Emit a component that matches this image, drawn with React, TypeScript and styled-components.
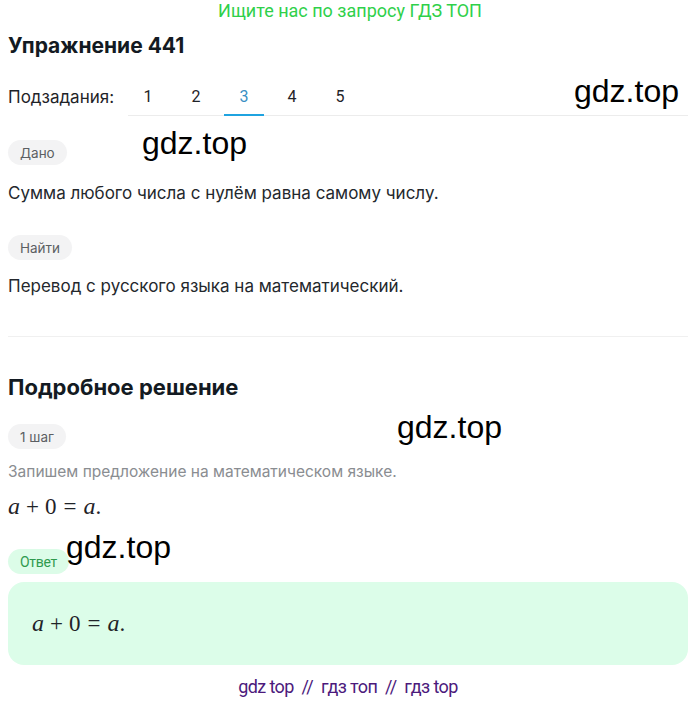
import styled, { createGlobalStyle } from "styled-components";

const GlobalStyle = createGlobalStyle`
  body {
    margin: 0;
    background: #ffffff;
    font-family: Inter, "Noto Sans", sans-serif;
    color: #1f2328;
  }
`;

const Page = styled.div`
  position: relative;
  width: 695px;
  padding: 0 7px 0 8px;
  box-sizing: border-box;
`;

const Banner = styled.div`
  font-family: Roboto, sans-serif;
  font-size: 18px;
  line-height: 22px;
  color: #2fd04a;
  text-align: center;
  padding-left: 4px;
`;

const Title = styled.h1`
  margin: 12px 0 0;
  font-size: 21px;
  line-height: 24px;
  font-weight: 700;
  color: #131a22;
`;

const TabsRow = styled.div`
  display: flex;
  align-items: flex-end;
  margin-top: 26px;
`;

const TabsLabel = styled.span`
  font-size: 17px;
  line-height: 26px;
  padding-bottom: 6px;
  width: 120px;
`;

const Tabs = styled.div`
  flex: 1;
  display: flex;
  gap: 8px;
  border-bottom: 1px solid #ececec;
`;

const Tab = styled.span<{ $active?: boolean }>`
  width: 40px;
  text-align: center;
  font-family: Roboto, sans-serif;
  font-size: 16px;
  line-height: 26px;
  padding-bottom: 4px;
  color: ${(p) => (p.$active ? "#3a8fc4" : "#1f2328")};
  border-bottom: 2px solid ${(p) => (p.$active ? "#1fa3e0" : "transparent")};
  margin-bottom: -1px;
`;

const Chip = styled.span<{ $green?: boolean }>`
  display: inline-flex;
  align-items: center;
  height: 25px;
  padding: 0 12px;
  border-radius: 13px;
  font-size: ${(p) => (p.$green ? "14px" : "13.5px")};
  font-family: ${(p) => (p.$green ? "Roboto, sans-serif" : "Inter, sans-serif")};
  background: ${(p) => (p.$green ? "#dcfce8" : "#f3f3f4")};
  color: ${(p) => (p.$green ? "#2f9a4e" : "#5c5f63")};
  letter-spacing: ${(p) => (p.$green ? "-0.3px" : "0")};
`;

const Block = styled.div<{ $top: number }>`
  margin-top: ${(p) => p.$top}px;
`;

const Text = styled.p`
  margin: 0;
  font-size: 17px;
  line-height: 24px;
  color: #24282d;
`;

const Divider = styled.hr`
  border: 0;
  border-top: 1px solid #f0f0f0;
  margin: 38px 0 0;
`;

const Heading = styled.h2`
  margin: 38px 0 0;
  font-size: 22px;
  line-height: 24px;
  font-weight: 700;
  color: #131a22;
`;

const Hint = styled.p`
  margin: 0;
  font-size: 15.5px;
  line-height: 20px;
  color: #8a8d91;
`;

const Math = styled.div`
  display: flex;
  align-items: baseline;
  font-family: "Liberation Serif", serif;
  font-size: 23px;
  line-height: 28px;
  color: #1f2328;
`;

const Var = styled.i`
  font-size: 24px;
  font-style: italic;
`;

const Op = styled.span<{ $rel?: boolean }>`
  margin: 0 ${(p) => (p.$rel ? "7px" : "6px")};
`;

const AnswerBox = styled.div`
  margin-top: 8px;
  height: 83px;
  border-radius: 16px;
  background: #dcfde9;
  display: flex;
  align-items: center;
  padding: 0 24px;
`;

const Footer = styled.div`
  margin-top: 8px;
  text-align: center;
  font-family: Roboto, sans-serif;
  font-size: 18px;
  line-height: 28px;
  letter-spacing: -0.6px;
  color: #4c1a7c;
  white-space: pre;
`;

const Watermark = styled.span<{ $x: number; $y: number }>`
  position: absolute;
  left: ${(p) => p.$x}px;
  top: ${(p) => p.$y}px;
  font-family: "Liberation Sans", Arial, sans-serif;
  font-size: 32px;
  line-height: 1;
  color: #000;
  pointer-events: none;
`;

const Formula = () => (
  <>
    <Var>a</Var>
    <Op>+</Op>
    <span>0</span>
    <Op $rel>=</Op>
    <Var>a</Var>
    <span>.</span>
  </>
);

export default function App() {
  return (
    <>
      <GlobalStyle />
      <Page>
        <Banner>Ищите нас по запросу ГДЗ ТОП</Banner>
        <Title>Упражнение 441</Title>
        <TabsRow>
          <TabsLabel>Подзадания:</TabsLabel>
          <Tabs>
            <Tab>1</Tab>
            <Tab>2</Tab>
            <Tab $active>3</Tab>
            <Tab>4</Tab>
            <Tab>5</Tab>
          </Tabs>
        </TabsRow>

        <Block $top={24}>
          <Chip>Дано</Chip>
        </Block>
        <Block $top={16}>
          <Text>Сумма любого числа с нулём равна самому числу.</Text>
        </Block>
        <Block $top={30}>
          <Chip>Найти</Chip>
        </Block>
        <Block $top={14}>
          <Text>Перевод с русского языка на математический.</Text>
        </Block>

        <Divider />
        <Heading>Подробное решение</Heading>

        <Block $top={25}>
          <Chip>1 шаг</Chip>
        </Block>
        <Block $top={13}>
          <Hint>Запишем предложение на математическом языке.</Hint>
        </Block>
        <Block $top={10}>
          <Math>
            <Formula />
          </Math>
        </Block>
        <Block $top={28}>
          <Chip $green>Ответ</Chip>
        </Block>
        <AnswerBox>
          <Math>
            <Formula />
          </Math>
        </AnswerBox>
        <Footer>{"gdz top  //  гдз топ  //  гдз top"}</Footer>

        <Watermark $x={574} $y={75}>gdz.top</Watermark>
        <Watermark $x={142} $y={127}>gdz.top</Watermark>
        <Watermark $x={397} $y={411}>gdz.top</Watermark>
        <Watermark $x={66} $y={531}>gdz.top</Watermark>
      </Page>
    </>
  );
}
